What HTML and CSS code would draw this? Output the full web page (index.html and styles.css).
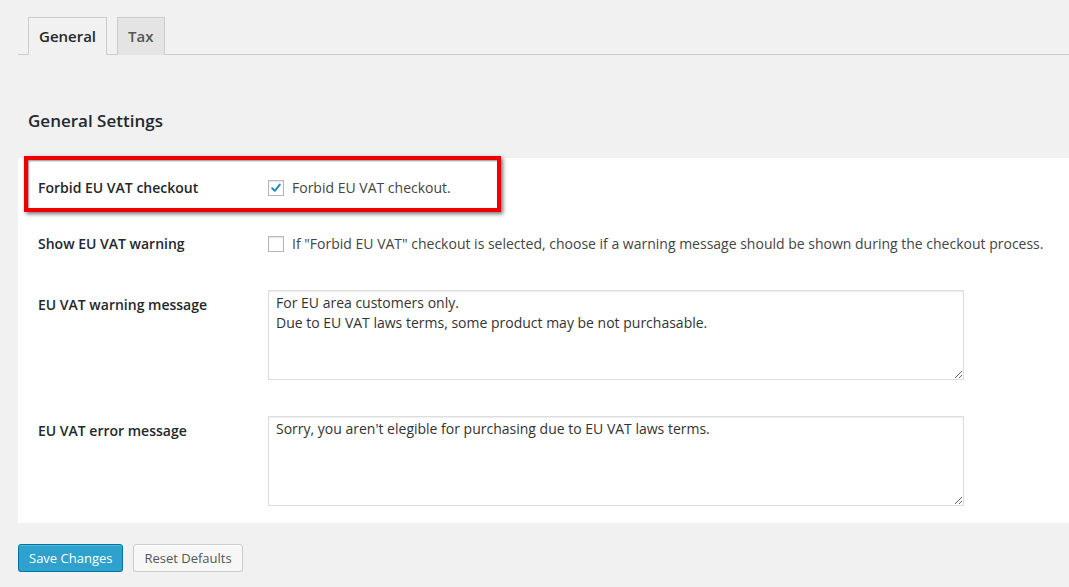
FILE: index.html
```html
<!DOCTYPE html>
<html lang="en">
<head>
<meta charset="utf-8">
<title>EU VAT Settings</title>
<link rel="stylesheet" href="styles.css">
</head>
<body>
<div class="wrap">
  <nav class="tabs">
    <a class="tab tab-active">General</a>
    <a class="tab">Tax</a>
  </nav>

  <h2 class="section-title">General Settings</h2>

  <div class="panel">
    <div class="highlight"></div>
    <div class="row row-first">
      <div class="row-label">Forbid EU VAT checkout</div>
      <div class="row-field">
        <label class="check">
          <span class="box"><svg width="14" height="14" viewBox="0 0 14 14"><path d="M3.2 7.2 L5.8 9.8 L10.8 3.6" fill="none" stroke="#1e8cbe" stroke-width="2" stroke-linecap="round" stroke-linejoin="round"/></svg></span>
          <span>Forbid EU VAT checkout.</span>
        </label>
      </div>
    </div>
    <div class="row">
      <div class="row-label">Show EU VAT warning</div>
      <div class="row-field">
        <label class="check">
          <span class="box"></span>
          <span>If "Forbid EU VAT" checkout is selected, choose if a warning message should be shown during the checkout process.</span>
        </label>
      </div>
    </div>
    <div class="row">
      <div class="row-label row-label-area">EU VAT warning message</div>
      <div class="row-field">
        <textarea class="area">For EU area customers only.
Due to EU VAT laws terms, some product may be not purchasable.</textarea>
      </div>
    </div>
    <div class="row row-last">
      <div class="row-label row-label-area">EU VAT error message</div>
      <div class="row-field">
        <textarea class="area">Sorry, you aren't elegible for purchasing due to EU VAT laws terms.</textarea>
      </div>
    </div>
  </div>

  <div class="actions">
    <button class="btn btn-primary">Save Changes</button>
    <button class="btn btn-secondary">Reset Defaults</button>
  </div>
</div>
</body>
</html>
```

FILE: styles.css
```css
* { box-sizing: border-box; }
html, body {
  margin: 0;
  padding: 0;
  background: #f1f1f1;
  font-family: "Open Sans", "Liberation Sans", sans-serif;
  color: #444;
  font-size: 14px;
}
.wrap {
  padding: 17px 0 0 18px;
}
.tabs {
  display: flex;
  gap: 10px;
  padding-left: 10px;
  border-bottom: 1px solid #ccc;
  height: 38px;
}
.tab {
  display: block;
  height: 38px;
  padding: 0 10px;
  line-height: 36px;
  font-size: 15px;
  font-weight: 600;
  color: #555;
  background: #e4e4e4;
  border: 1px solid #ccc;
  border-bottom: none;
}
.tab-active {
  background: #f1f1f1;
  color: #23282d;
  border-bottom: 1px solid #f1f1f1;
}
.section-title {
  margin: 0;
  padding: 54px 0 0 10px;
  font-size: 17px;
  font-weight: 600;
  color: #23282d;
  line-height: 24px;
}
.panel {
  position: relative;
  margin-top: 25px;
  background: #fff;
  padding: 20px 0 17px 20px;
}
.highlight {
  position: absolute;
  left: 6px;
  top: -2px;
  width: 477px;
  height: 56px;
  border: 4px solid #ee0000;
  box-shadow: 2px 2px 4px rgba(0,0,0,0.55), inset 1px 1px 2px rgba(0,0,0,0.45);
  pointer-events: none;
}
.row {
  display: flex;
  padding: 18px 0;
}
.row-first { padding-top: 0; }
.row-last { padding-bottom: 0; }
.row-label {
  width: 230px;
  flex: none;
  font-weight: 600;
  color: #23282d;
  line-height: 20px;
}
.row-label-area {
  padding-top: 5px;
}
.row-field {
  flex: 1;
}
.check {
  display: flex;
  align-items: center;
  gap: 8px;
  line-height: 20px;
  color: #444;
}
.box {
  width: 16px;
  height: 16px;
  flex: none;
  border: 1px solid #b4b9be;
  background: #fff;
  box-shadow: inset 0 1px 2px rgba(0,0,0,0.1);
  display: flex;
  align-items: center;
  justify-content: center;
}
.area {
  display: block;
  width: 696px;
  height: 90px;
  margin: 0;
  padding: 2px 7px;
  border: 1px solid #ddd;
  box-shadow: inset 0 1px 2px rgba(0,0,0,0.07);
  font-family: "Open Sans", "Liberation Sans", sans-serif;
  font-size: 14px;
  line-height: 20px;
  color: #333;
  background: #fff;
}
.actions {
  display: flex;
  gap: 10px;
  padding-top: 21px;
}
.btn {
  height: 28px;
  padding: 0 10px;
  font-family: "Open Sans", "Liberation Sans", sans-serif;
  font-size: 13px;
  line-height: 26px;
  border-radius: 3px;
  border: 1px solid #ccc;
  white-space: nowrap;
}
.btn-primary {
  background: #2ea2cc;
  border-color: #0074a2;
  color: #fff;
  box-shadow: inset 0 1px 0 rgba(120,200,230,0.5), 0 1px 0 rgba(0,0,0,0.15);
}
.btn-secondary {
  background: #f7f7f7;
  color: #555;
  box-shadow: inset 0 1px 0 #fff, 0 1px 0 rgba(0,0,0,0.08);
}
```
